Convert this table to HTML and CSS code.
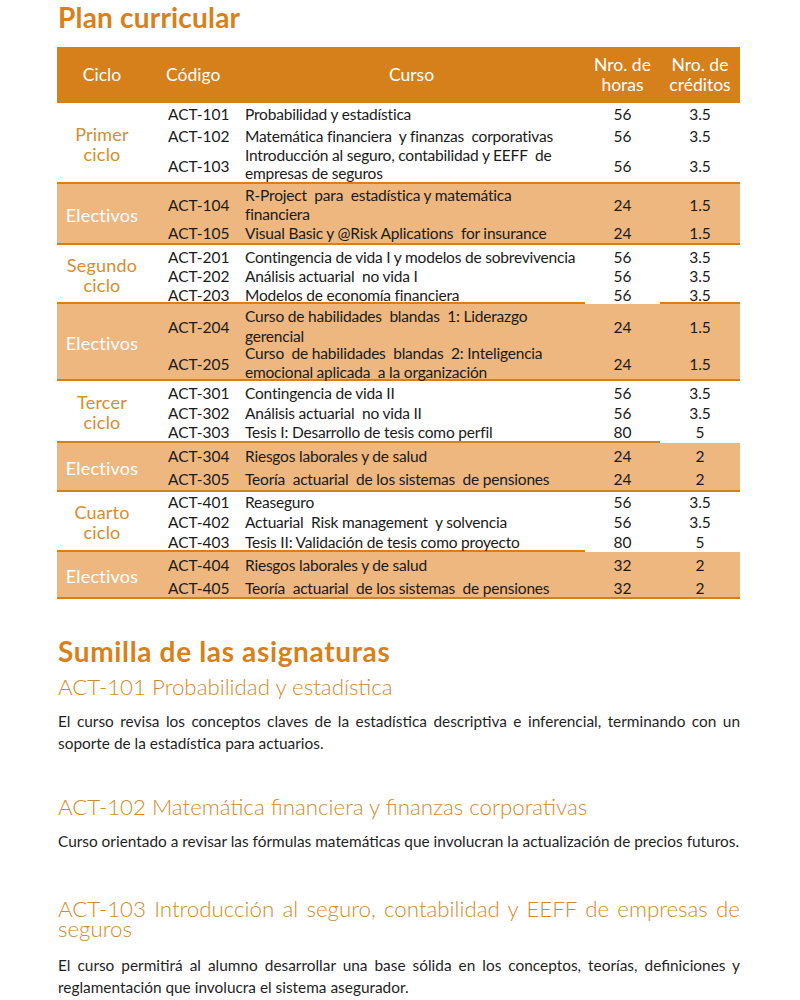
FILE: index.html
```html
<!DOCTYPE html>
<html lang="es">
<head>
<meta charset="utf-8">
<title>Plan curricular</title>
<link rel="stylesheet" href="styles.css">
</head>
<body>
<div class="page">
  <h1 class="title">Plan curricular</h1>
  <table class="plan">
    <thead>
      <tr>
        <th class="c-ciclo">Ciclo</th>
        <th class="c-cod">Código</th>
        <th class="c-curso">Curso</th>
        <th class="c-hrs">Nro. de<br>horas</th>
        <th class="c-cred">Nro. de<br>créditos</th>
      </tr>
    </thead>
    <tbody class="grp">
      <tr class="r1"><td class="ciclo" rowspan="3">Primer<br>ciclo</td><td class="cod">ACT-101</td><td class="curso">Probabilidad y estadística</td><td class="num">56</td><td class="num">3.5</td></tr>
      <tr class="r2"><td class="cod">ACT-102</td><td class="curso">Matemática financiera &nbsp;y finanzas &nbsp;corporativas</td><td class="num">56</td><td class="num">3.5</td></tr>
      <tr class="r3 last"><td class="cod">ACT-103</td><td class="curso two">Introducción al seguro, contabilidad y EEFF &nbsp;de empresas de seguros</td><td class="num">56</td><td class="num">3.5</td></tr>
    </tbody>
    <tbody class="grp elect">
      <tr class="r4"><td class="ciclo" rowspan="2">Electivos</td><td class="cod">ACT-104</td><td class="curso two">R-Project &nbsp;para &nbsp;estadística y matemática<br>financiera</td><td class="num">24</td><td class="num">1.5</td></tr>
      <tr class="r5 last"><td class="cod">ACT-105</td><td class="curso">Visual Basic y @Risk Aplications &nbsp;for insurance</td><td class="num">24</td><td class="num">1.5</td></tr>
    </tbody>
    <tbody class="grp">
      <tr class="r6"><td class="ciclo" rowspan="3">Segundo<br>ciclo</td><td class="cod">ACT-201</td><td class="curso">Contingencia de vida I y modelos de sobrevivencia</td><td class="num">56</td><td class="num">3.5</td></tr>
      <tr class="r7"><td class="cod">ACT-202</td><td class="curso">Análisis actuarial &nbsp;no vida I</td><td class="num">56</td><td class="num">3.5</td></tr>
      <tr class="r8 last gap-hrs"><td class="cod">ACT-203</td><td class="curso">Modelos de economía financiera</td><td class="num">56</td><td class="num">3.5</td></tr>
    </tbody>
    <tbody class="grp elect">
      <tr class="r9"><td class="ciclo" rowspan="2">Electivos</td><td class="cod">ACT-204</td><td class="curso two">Curso de habilidades &nbsp;blandas &nbsp;1: Liderazgo gerencial</td><td class="num">24</td><td class="num">1.5</td></tr>
      <tr class="r10 last"><td class="cod">ACT-205</td><td class="curso two"><div class="squeeze">Curso &nbsp;de habilidades &nbsp;blandas &nbsp;2: Inteligencia emocional aplicada &nbsp;a la organización</div></td><td class="num">24</td><td class="num">1.5</td></tr>
    </tbody>
    <tbody class="grp">
      <tr class="r11"><td class="ciclo" rowspan="3">Tercer<br>ciclo</td><td class="cod">ACT-301</td><td class="curso">Contingencia de vida II</td><td class="num">56</td><td class="num">3.5</td></tr>
      <tr class="r12"><td class="cod">ACT-302</td><td class="curso">Análisis actuarial &nbsp;no vida II</td><td class="num">56</td><td class="num">3.5</td></tr>
      <tr class="r13 last gap-cred"><td class="cod">ACT-303</td><td class="curso">Tesis I: Desarrollo de tesis como perfil</td><td class="num">80</td><td class="num">5</td></tr>
    </tbody>
    <tbody class="grp elect">
      <tr class="r14"><td class="ciclo" rowspan="2">Electivos</td><td class="cod">ACT-304</td><td class="curso">Riesgos laborales y de salud</td><td class="num">24</td><td class="num">2</td></tr>
      <tr class="r15 last"><td class="cod">ACT-305</td><td class="curso">Teoría &nbsp;actuarial &nbsp;de los sistemas &nbsp;de pensiones</td><td class="num">24</td><td class="num">2</td></tr>
    </tbody>
    <tbody class="grp">
      <tr class="r16"><td class="ciclo" rowspan="3">Cuarto<br>ciclo</td><td class="cod">ACT-401</td><td class="curso">Reaseguro</td><td class="num">56</td><td class="num">3.5</td></tr>
      <tr class="r17"><td class="cod">ACT-402</td><td class="curso">Actuarial &nbsp;Risk management &nbsp;y solvencia</td><td class="num">56</td><td class="num">3.5</td></tr>
      <tr class="r18 last gap-nums"><td class="cod">ACT-403</td><td class="curso">Tesis II: Validación de tesis como proyecto</td><td class="num">80</td><td class="num">5</td></tr>
    </tbody>
    <tbody class="grp elect">
      <tr class="r19"><td class="ciclo" rowspan="2">Electivos</td><td class="cod">ACT-404</td><td class="curso">Riesgos laborales y de salud</td><td class="num">32</td><td class="num">2</td></tr>
      <tr class="r20 last"><td class="cod">ACT-405</td><td class="curso">Teoría &nbsp;actuarial &nbsp;de los sistemas &nbsp;de pensiones</td><td class="num">32</td><td class="num">2</td></tr>
    </tbody>
  </table>

  <h2 class="section">Sumilla de las asignaturas</h2>

  <h3 class="sub first">ACT-101 Probabilidad y estadística</h3>
  <p class="desc">El curso revisa los conceptos claves de la estadística descriptiva e inferencial, terminando con un soporte de la estadística para actuarios.</p>

  <h3 class="sub">ACT-102 Matemática financiera y finanzas corporativas</h3>
  <p class="desc">Curso orientado a revisar las fórmulas matemáticas que involucran la actualización de precios futuros.</p>

  <h3 class="sub third">ACT-103 Introducción al seguro, contabilidad y EEFF de empresas de seguros</h3>
  <p class="desc last-desc">El curso permitirá al alumno desarrollar una base sólida en los conceptos, teorías, definiciones y reglamentación que involucra el sistema asegurador.</p>
</div>
</body>
</html>
```

FILE: styles.css
```css
html, body {
  margin: 0;
  padding: 0;
  background: #ffffff;
}

.page {
  width: 683px;
  margin-left: 57px;
  font-family: Lato, "Open Sans", sans-serif;
  color: #1a1a1a;
}

.title {
  margin: 0 0 13px 1px;
  font-family: Lato, sans-serif;
  font-weight: 700;
  font-size: 28px;
  line-height: 34px;
  letter-spacing: 0.2px;
  color: #d8801a;
}

/* ---------- table ---------- */
.plan {
  width: 683px;
  border-collapse: separate;
  border-spacing: 0;
  table-layout: fixed;
  font-size: 15.5px;
}

.plan th {
  background: #d6801b;
  color: #ffffff;
  font-weight: 400;
  font-size: 17.5px;
  line-height: 20px;
  height: 56px;
  padding: 0;
  vertical-align: middle;
}

.c-ciclo { width: 90px; text-align: center; }
.c-cod { width: 72px; text-align: left; padding-left: 19px !important; }
.c-curso { width: 347px; text-align: center; }
.c-hrs { width: 75px; text-align: center; }
.c-cred { width: 80px; text-align: center; }

.plan td {
  padding: 0;
  line-height: 19px;
  vertical-align: top;
  white-space: normal;
}

.plan td.cod {
  padding-left: 21px;
}

.plan td.curso {
  padding-left: 7px;
  padding-right: 0;
  letter-spacing: -0.2px;
}

.plan td.num {
  text-align: center;
}

.plan td.ciclo {
  vertical-align: middle;
  text-align: center;
  font-size: 18px;
  line-height: 20px;
  letter-spacing: 0.2px;
  padding-top: 2px;
  color: #d98c2c;
  border-bottom: 2px solid #d6801b;
}

.elect td {
  background: #edb77f;
}

.plan .elect td.ciclo {
  color: #ffffff;
}

.last td {
  border-bottom: 2px solid #d6801b;
}

.gap-hrs td:nth-child(3) { border-bottom: 0; }
.gap-cred td:nth-child(4) { border-bottom: 0; }
.gap-nums td:nth-child(3),
.gap-nums td:nth-child(4) { border-bottom: 0; }

.squeeze {
  margin: -2px 0 -3px;
  line-height: 19px;
}

/* row geometry: padding-top / line-height */
.r1 td  { padding-top: 1px; line-height: 21px; }
.r2 td  { padding-top: 2px; line-height: 19px; }
.r3 td  { padding-top: 4px; line-height: 32px; }
.plan .r3 td.two { padding-top: 0; line-height: 18px; }
.r4 td  { padding-top: 2px; line-height: 38px; }
.plan .r4 td.two { padding-top: 2px; line-height: 19px; }
.r5 td  { padding-top: 0; line-height: 19px; }
.r6 td  { padding-top: 3px; line-height: 19px; }
.r7 td  { padding-top: 0; line-height: 19px; }
.r8 td  { padding-top: 3px; line-height: 13px; }
.r9 td  { padding-top: 5px; line-height: 37px; }
.plan .r9 td.two { padding-top: 2px; line-height: 20px; }
.r10 td { padding-top: 3px; line-height: 30px; }
.plan .r10 td.two { padding-top: 0; line-height: 19px; }
.r11 td { padding-top: 3px; line-height: 19px; }
.r12 td { padding-top: 1px; line-height: 19px; }
.r13 td { padding-top: 1px; line-height: 17px; }
.r14 td { padding-top: 2px; line-height: 22px; }
.r15 td { padding-top: 1px; line-height: 22px; }
.r16 td { padding-top: 1px; line-height: 19px; }
.r17 td { padding-top: 1px; line-height: 19px; }
.r18 td { padding-top: 3px; line-height: 15px; }
.r19 td { padding-top: 2px; line-height: 22px; }
.r20 td { padding-top: 4px; line-height: 17px; }

/* ---------- summaries ---------- */
.section {
  margin: 35px 0 0 1px;
  font-family: Lato, sans-serif;
  font-weight: 700;
  font-size: 28px;
  line-height: 34px;
  letter-spacing: 0.65px;
  color: #d8801a;
}

.sub {
  margin: 43px 0 0 1px;
  font-family: Lato, sans-serif;
  font-weight: 300;
  font-size: 22.3px;
  line-height: 20px;
  color: #d48a2c;
  text-align: justify;
}

.sub.first {
  margin-top: 9px;
}

.sub.third {
  margin-top: 47px;
}

.desc {
  margin: 13px 0 0 1px;
  font-size: 15.4px;
  line-height: 22px;
  text-align: justify;
  color: #1f1f1f;
}

.desc.last-desc {
  margin-top: 15px;
}
```
